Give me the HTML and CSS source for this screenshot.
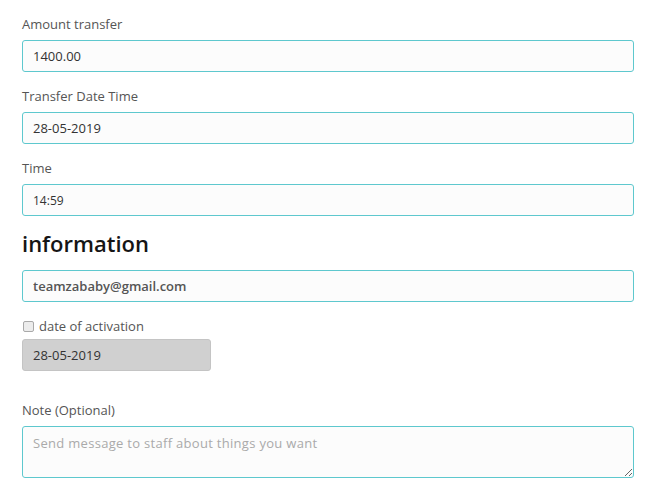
FILE: index.html
```html
<!DOCTYPE html>
<html lang="en">
<head>
    <meta charset="UTF-8">
    <meta name="viewport" content="width=device-width, initial-scale=1.0">
    <title>Transfer</title>
    <link rel="stylesheet" href="styles.css">
</head>
<body>
    <form class="transfer-form">
        <div class="field">
            <label for="amount">Amount transfer</label>
            <input type="text" id="amount" class="box" value="1400.00">
        </div>
        <div class="field">
            <label for="tdate">Transfer Date Time</label>
            <input type="text" id="tdate" class="box" value="28-05-2019">
        </div>
        <div class="field">
            <label for="ttime">Time</label>
            <input type="text" id="ttime" class="box small-text" value="14:59">
        </div>

        <h2 class="section-title">information</h2>

        <div class="field">
            <input type="text" id="email" class="box bold-text" value="teamzababy@gmail.com">
        </div>
        <div class="check-row">
            <input type="checkbox" id="activate">
            <label for="activate">date of activation</label>
        </div>
        <input type="text" class="box disabled-box" value="28-05-2019" disabled>

        <div class="field note">
            <label for="note">Note (Optional)</label>
            <textarea id="note" class="box note-box" placeholder="Send message to staff about things you want"></textarea>
        </div>
    </form>
</body>
</html>
```
FILE: styles.css
```css
body {
margin: 0;
padding: 14px 16px 0 22px;
font-family: "Open Sans", sans-serif;
color: #444;
background: #fff;
}

/* each label + input group */
.field {
margin-bottom: 14px;
}

.field label {
display: block;
font-size: 13px;
line-height: 20px;
margin-bottom: 6px;
color: #555;
}

.box {
display: block;
box-sizing: border-box;
width: 100%;
height: 32px;
padding: 0 10px;
border: 1px solid #5ec8ce;
border-radius: 3px;
background: #fcfcfc;
font-family: "Open Sans", sans-serif;
font-size: 13px;
color: #333;
outline: none;
}

.small-text {
font-size: 12px;
}

.bold-text {
font-weight: 600;
color: #555;
}

.section-title {
margin: 0 0 14px;
font-size: 22px;
line-height: 26px;
font-weight: 600;
color: #151515;
}

/* checkbox line */
.check-row {
display: flex;
align-items: center;
height: 20px;
margin-bottom: 3px;
font-size: 13px;
color: #555;
}

.check-row input {
appearance: none;
width: 11px;
height: 11px;
margin: 0 5px 0 1px;
border: 1px solid #a9a9a9;
border-radius: 2px;
background: #ececec;
}

.disabled-box {
width: 189px;
background: #d0d0d0;
border-color: #c4c4c4;
color: #333;
}

.note {
margin-top: 29px;
}

.note-box {
height: 52px;
padding: 7px 10px;
resize: vertical;
}

.note-box::placeholder {
color: #aaa;
letter-spacing: 0.3px;
}
```
